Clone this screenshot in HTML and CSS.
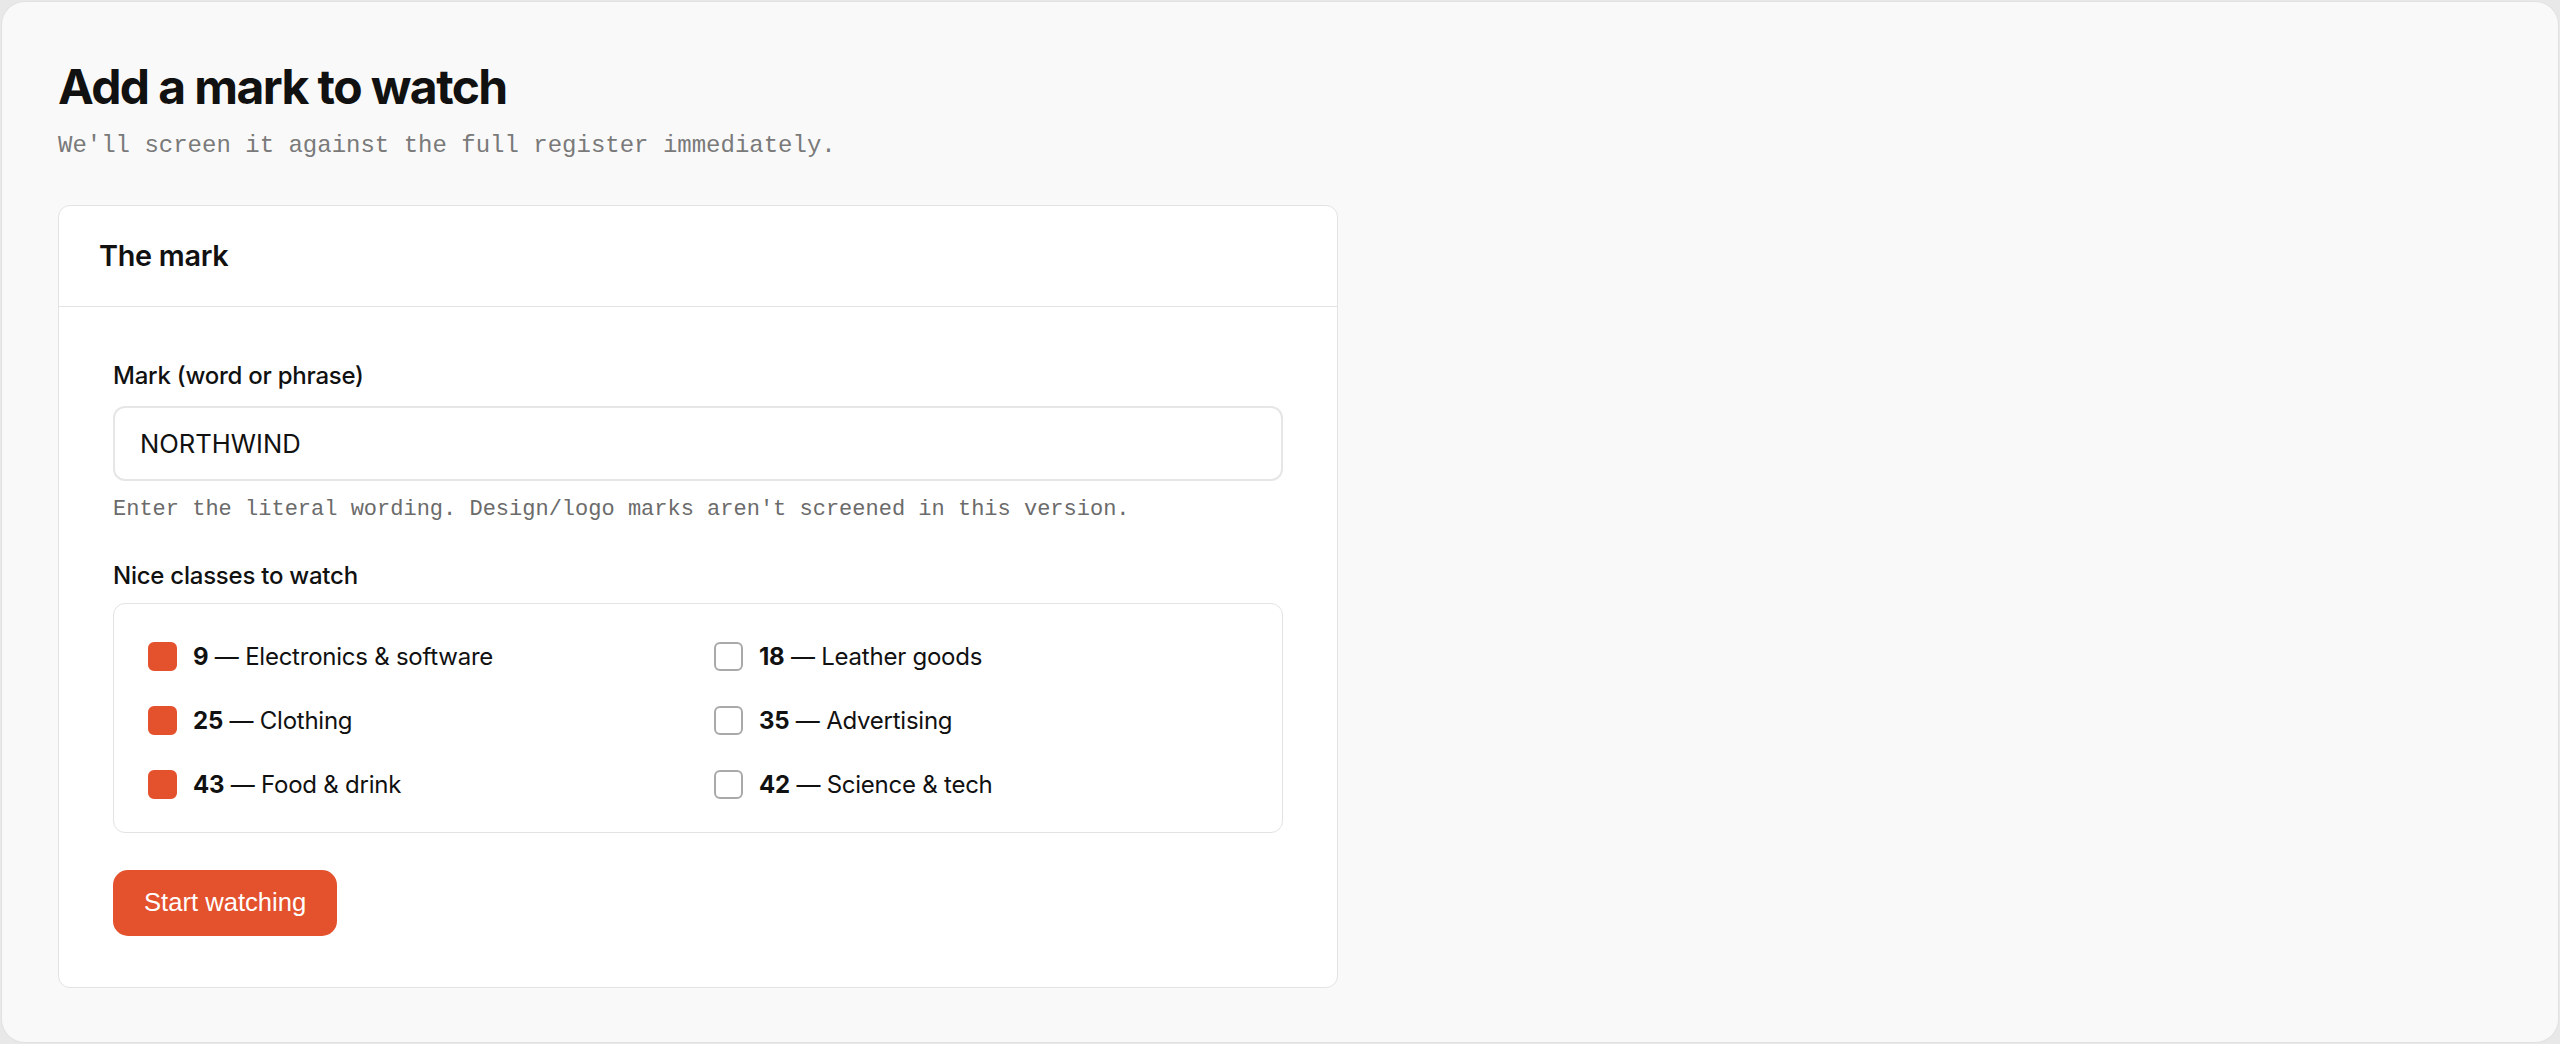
FILE: index.html
```html
<!DOCTYPE html>
<html lang="en">
<head>
  <meta charset="UTF-8">
  <meta name="viewport" content="width=device-width, initial-scale=1.0">
  <title>Add a mark to watch</title>
  <link rel="stylesheet" href="styles.css">
</head>
<body>
  <div class="frame">
    <h1 class="title">Add a mark to watch</h1>
    <p class="subtitle">We'll screen it against the full register immediately.</p>

    <form class="card">
      <div class="card-header">
        <h2>The mark</h2>
      </div>
      <div class="card-body">
        <label class="field-label" for="markInput">Mark (word or phrase)</label>
        <input type="text" id="markInput" class="text-input" value="NORTHWIND">
        <p class="hint">Enter the literal wording. Design/logo marks aren't screened in this version.</p>

        <div class="field-label group-label">Nice classes to watch</div>
        <div class="class-box">
          <label class="class-option"><input type="checkbox" checked><span><b>9</b> — Electronics &amp; software</span></label>
          <label class="class-option"><input type="checkbox"><span><b>18</b> — Leather goods</span></label>
          <label class="class-option"><input type="checkbox" checked><span><b>25</b> — Clothing</span></label>
          <label class="class-option"><input type="checkbox"><span><b>35</b> — Advertising</span></label>
          <label class="class-option"><input type="checkbox" checked><span><b>43</b> — Food &amp; drink</span></label>
          <label class="class-option"><input type="checkbox"><span><b>42</b> — Science &amp; tech</span></label>
        </div>

        <button type="button" class="btn-primary">Start watching</button>
      </div>
    </form>
  </div>
</body>
</html>
```

FILE: styles.css
```css
body {
  margin: 0;
  background-color: #e8e8e8;
  font-family: 'Inter', 'Roboto', sans-serif;
  color: #111;
}

.frame {
  margin: 1px;
  height: calc(100vh - 2px);
  box-sizing: border-box;
  border: 1px solid #e2e2e2;
  border-radius: 24px;
  background-color: #f9f9f9;
  padding: 56px 56px;
}

.title {
  margin: 0;
  font-size: 48px;
  font-weight: 700;
  line-height: 1.2;
  letter-spacing: -0.033em;
}

.subtitle {
  margin: 13px 0 0;
  font-family: 'Liberation Mono', monospace;
  font-size: 24px;
  line-height: 1.45;
  color: #7a7a7a;
}

.card {
  margin-top: 42px;
  max-width: 1280px;
  box-sizing: border-box;
  background-color: #fff;
  border: 1px solid #e3e3e3;
  border-radius: 12px;
}

.card-header {
  padding: 31px 40px;
  border-bottom: 1px solid #e3e3e3;
}

.card-header h2 {
  margin: 0;
  font-size: 28.8px;
  font-weight: 600;
  line-height: 1.3;
  letter-spacing: -0.01em;
}

.card-body {
  padding: 51px 54px;
}

.field-label {
  display: block;
  margin-bottom: 12px;
  font-size: 24px;
  font-weight: 500;
  line-height: 1.5;
  letter-spacing: -0.01em;
}

.group-label {
  margin-bottom: 9px;
}

.text-input {
  display: block;
  width: 100%;
  height: 75px;
  box-sizing: border-box;
  padding: 0 25px;
  border: 2px solid #e6e6e6;
  border-radius: 12px;
  font-family: 'Inter', sans-serif;
  font-size: 25.6px;
  color: #111;
  background: #fff;
}

.hint {
  margin: 12px 0 32px;
  font-family: 'Liberation Mono', monospace;
  font-size: 22px;
  line-height: 1.5;
  color: #6b6b6b;
}

.class-box {
  display: grid;
  grid-template-columns: 1fr 1fr;
  column-gap: 32px;
  row-gap: 28px;
  padding: 35px 34px 29px;
  border: 1px solid #e3e3e3;
  border-radius: 12px;
}

.class-option {
  display: flex;
  align-items: center;
  gap: 16px;
  font-size: 24px;
  line-height: 36px;
  letter-spacing: -0.01em;
}

.class-option b {
  font-weight: 700;
}

.class-option input {
  appearance: none;
  -webkit-appearance: none;
  margin: 0;
  width: 29px;
  height: 29px;
  flex: none;
  box-sizing: border-box;
  border: 2px solid #a9a9a9;
  border-radius: 6px;
  background: #fff;
}

.class-option input:checked {
  border-color: #e4512d;
  background-color: #e4512d;
}

.btn-primary {
  margin-top: 37px;
  height: 66px;
  padding: 0 31px;
  border: none;
  border-radius: 15px;
  background-color: #e4512d;
  color: #fff;
  font-family: 'Liberation Sans', Arial, sans-serif;
  font-size: 25.6px;
  cursor: pointer;
}
```
